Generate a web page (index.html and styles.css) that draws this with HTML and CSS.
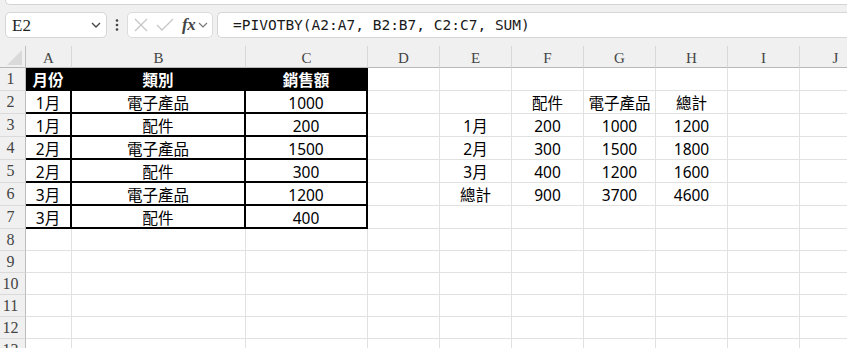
FILE: index.html
```html
<!DOCTYPE html>
<html>
<head>
<meta charset="utf-8">
<link rel="stylesheet" href="styles.css">
</head>
<body>
<div class="app">
  <div class="ribbon-edge"></div>

  <div class="toolbar">
    <div class="namebox">
      <span class="ref">E2</span>
      <svg class="chev" width="10" height="6" viewBox="0 0 10 6"><polyline points="1,1 5,5 9,1" fill="none" stroke="#444" stroke-width="1.3"/></svg>
    </div>
    <svg class="dots" width="4" height="12" viewBox="0 0 4 12"><circle cx="2" cy="1.5" r="1.3" fill="#444"/><circle cx="2" cy="6" r="1.3" fill="#444"/><circle cx="2" cy="10.5" r="1.3" fill="#444"/></svg>
    <div class="fxbox">
      <svg width="14" height="14" viewBox="0 0 14 14"><path d="M1 1L13 13M13 1L1 13" stroke="#c6c6c6" stroke-width="1.3" fill="none"/></svg>
      <svg class="check" width="18" height="14" viewBox="0 0 18 14"><polyline points="1,7 6,12 17,1" stroke="#c6c6c6" stroke-width="1.3" fill="none"/></svg>
      <span class="fx">fx</span>
      <svg class="chev2" width="10" height="6" viewBox="0 0 10 6"><polyline points="1,1 5,5 9,1" fill="none" stroke="#777" stroke-width="1.2"/></svg>
    </div>
    <div class="formula">=PIVOTBY(A2:A7, B2:B7, C2:C7, SUM)</div>
  </div>

  <div class="sheet">
    <!-- column headers -->
    <div class="corner"><svg width="26" height="21" viewBox="0 0 26 21"><polygon points="22,4 22,19 7,19" fill="#dadada"/></svg></div>
    <div class="ch">A</div><div class="ch">B</div><div class="ch">C</div><div class="ch">D</div><div class="ch">E</div><div class="ch">F</div><div class="ch">G</div><div class="ch">H</div><div class="ch">I</div><div class="ch">J</div>

    <!-- row 1 -->
    <div class="rh">1</div>
    <div class="c th">月份</div><div class="c th">類別</div><div class="c th">銷售額</div>
    <div class="c"></div><div class="c"></div><div class="c"></div><div class="c"></div><div class="c"></div><div class="c"></div><div class="c"></div>

    <!-- row 2 -->
    <div class="rh">2</div>
    <div class="c td">1月</div><div class="c td">電子產品</div><div class="c td">1000</div>
    <div class="c"></div><div class="c"></div><div class="c">配件</div><div class="c">電子產品</div><div class="c">總計</div><div class="c"></div><div class="c"></div>

    <!-- row 3 -->
    <div class="rh">3</div>
    <div class="c td">1月</div><div class="c td">配件</div><div class="c td">200</div>
    <div class="c"></div><div class="c">1月</div><div class="c">200</div><div class="c">1000</div><div class="c">1200</div><div class="c"></div><div class="c"></div>

    <!-- row 4 -->
    <div class="rh">4</div>
    <div class="c td">2月</div><div class="c td">電子產品</div><div class="c td">1500</div>
    <div class="c"></div><div class="c">2月</div><div class="c">300</div><div class="c">1500</div><div class="c">1800</div><div class="c"></div><div class="c"></div>

    <!-- row 5 -->
    <div class="rh">5</div>
    <div class="c td">2月</div><div class="c td">配件</div><div class="c td">300</div>
    <div class="c"></div><div class="c">3月</div><div class="c">400</div><div class="c">1200</div><div class="c">1600</div><div class="c"></div><div class="c"></div>

    <!-- row 6 -->
    <div class="rh">6</div>
    <div class="c td">3月</div><div class="c td">電子產品</div><div class="c td">1200</div>
    <div class="c"></div><div class="c">總計</div><div class="c">900</div><div class="c">3700</div><div class="c">4600</div><div class="c"></div><div class="c"></div>

    <!-- row 7 -->
    <div class="rh">7</div>
    <div class="c td">3月</div><div class="c td">配件</div><div class="c td">400</div>
    <div class="c"></div><div class="c"></div><div class="c"></div><div class="c"></div><div class="c"></div><div class="c"></div><div class="c"></div>

    <!-- empty rows -->
    <div class="rh">8</div>
    <div class="c"></div><div class="c"></div><div class="c"></div><div class="c"></div><div class="c"></div><div class="c"></div><div class="c"></div><div class="c"></div><div class="c"></div><div class="c"></div>
    <div class="rh">9</div>
    <div class="c"></div><div class="c"></div><div class="c"></div><div class="c"></div><div class="c"></div><div class="c"></div><div class="c"></div><div class="c"></div><div class="c"></div><div class="c"></div>
    <div class="rh">10</div>
    <div class="c"></div><div class="c"></div><div class="c"></div><div class="c"></div><div class="c"></div><div class="c"></div><div class="c"></div><div class="c"></div><div class="c"></div><div class="c"></div>
    <div class="rh">11</div>
    <div class="c"></div><div class="c"></div><div class="c"></div><div class="c"></div><div class="c"></div><div class="c"></div><div class="c"></div><div class="c"></div><div class="c"></div><div class="c"></div>
    <div class="rh">12</div>
    <div class="c"></div><div class="c"></div><div class="c"></div><div class="c"></div><div class="c"></div><div class="c"></div><div class="c"></div><div class="c"></div><div class="c"></div><div class="c"></div>
    <div class="rh">13</div>
    <div class="c"></div><div class="c"></div><div class="c"></div><div class="c"></div><div class="c"></div><div class="c"></div><div class="c"></div><div class="c"></div><div class="c"></div><div class="c"></div>
  </div>
</div>
</body>
</html>
```

FILE: styles.css
```css
html, body {
  margin: 0;
  padding: 0;
  background: #f0f0f0;
  overflow: hidden;
}

.app {
  width: 847px;
  height: 348px;
  overflow: hidden;
  background: #f0f0f0;
}

/* bottom edge of the ribbon card */
.ribbon-edge {
  height: 4px;
  margin-left: 5px;
  width: 900px;
  background: #fff;
  border: 1px solid #d3d3d3;
  border-top: none;
  border-bottom-left-radius: 6px;
}

/* name box / fx / formula row */
.toolbar {
  display: flex;
  align-items: center;
  height: 26px;
  margin-top: 7px;
  margin-bottom: 8px;
  padding-left: 5px;
}
.toolbar > * { flex: none; }

.namebox {
  box-sizing: border-box;
  width: 102px;
  height: 26px;
  background: #fff;
  border: 1px solid #d6d6d6;
  border-radius: 5px;
  display: flex;
  align-items: center;
  padding-left: 6px;
  padding-right: 5px;
}
.namebox .ref {
  flex: 1;
  font: 17px "Liberation Serif", serif;
  color: #222;
  padding-top: 1px;
}

.dots {
  margin-left: 8px;
  margin-right: 8px;
}

.fxbox {
  box-sizing: border-box;
  width: 86px;
  height: 26px;
  background: #fff;
  border: 1px solid #dcdcdc;
  border-radius: 5px;
  display: flex;
  align-items: center;
  padding-left: 6px;
}
.fxbox .check { margin-left: 8px; }
.fxbox .fx {
  margin-left: 8px;
  font: italic bold 17px "Liberation Serif", serif;
  color: #444;
  letter-spacing: -0.5px;
}
.fxbox .chev2 { margin-left: 3px; }

.formula {
  box-sizing: border-box;
  margin-left: 4px;
  width: 700px;
  height: 26px;
  background: #fff;
  border: 1px solid #d6d6d6;
  border-right: none;
  border-radius: 5px 0 0 5px;
  padding-left: 15px;
  font: 14.5px "DejaVu Sans Mono", monospace;
  line-height: 24px;
  color: #1a1a1a;
  white-space: nowrap;
}

/* the grid */
.sheet {
  display: grid;
  grid-template-columns: 26px 46px 174px 122px repeat(7, 72px);
  grid-template-rows: 22px repeat(7, 23px) repeat(6, 22px);
}

.corner {
  background: #f0f0f0;
  border-right: 1px solid #bdbdbd;
  border-bottom: 1px solid #b8b8b8;
  box-sizing: border-box;
}
.corner svg { display: block; }

.ch {
  box-sizing: border-box;
  background: #f0f0f0;
  border-right: 1px solid #d8d8d8;
  border-bottom: 1px solid #b8b8b8;
  font: 15px "Liberation Serif", serif;
  color: #444;
  text-align: center;
  line-height: 22px;
  padding-top: 1px;
}

.rh {
  box-sizing: border-box;
  background: #f0f0f0;
  border-right: 1px solid #bdbdbd;
  border-bottom: 1px solid #dadada;
  font: 16px "Liberation Serif", serif;
  color: #444;
  text-align: center;
  padding-right: 4px;
  line-height: 22px;
}

.c {
  box-sizing: border-box;
  background: #fff;
  border-right: 1px solid #e1e1e1;
  border-bottom: 1px solid #e1e1e1;
  font: 15.5px "Noto Sans", "Noto Sans CJK TC", sans-serif;
  color: #000;
  text-align: center;
  line-height: 22px;
  padding-top: 1px;
  white-space: nowrap;
  overflow: hidden;
}

/* source table */
.th {
  background: #000;
  color: #fff;
  font-weight: bold;
  border-right: 2px solid #000;
  border-bottom: 1px solid #000;
}
.td {
  border-right: 2px solid #000;
  border-bottom: 2px solid #000;
}
```
